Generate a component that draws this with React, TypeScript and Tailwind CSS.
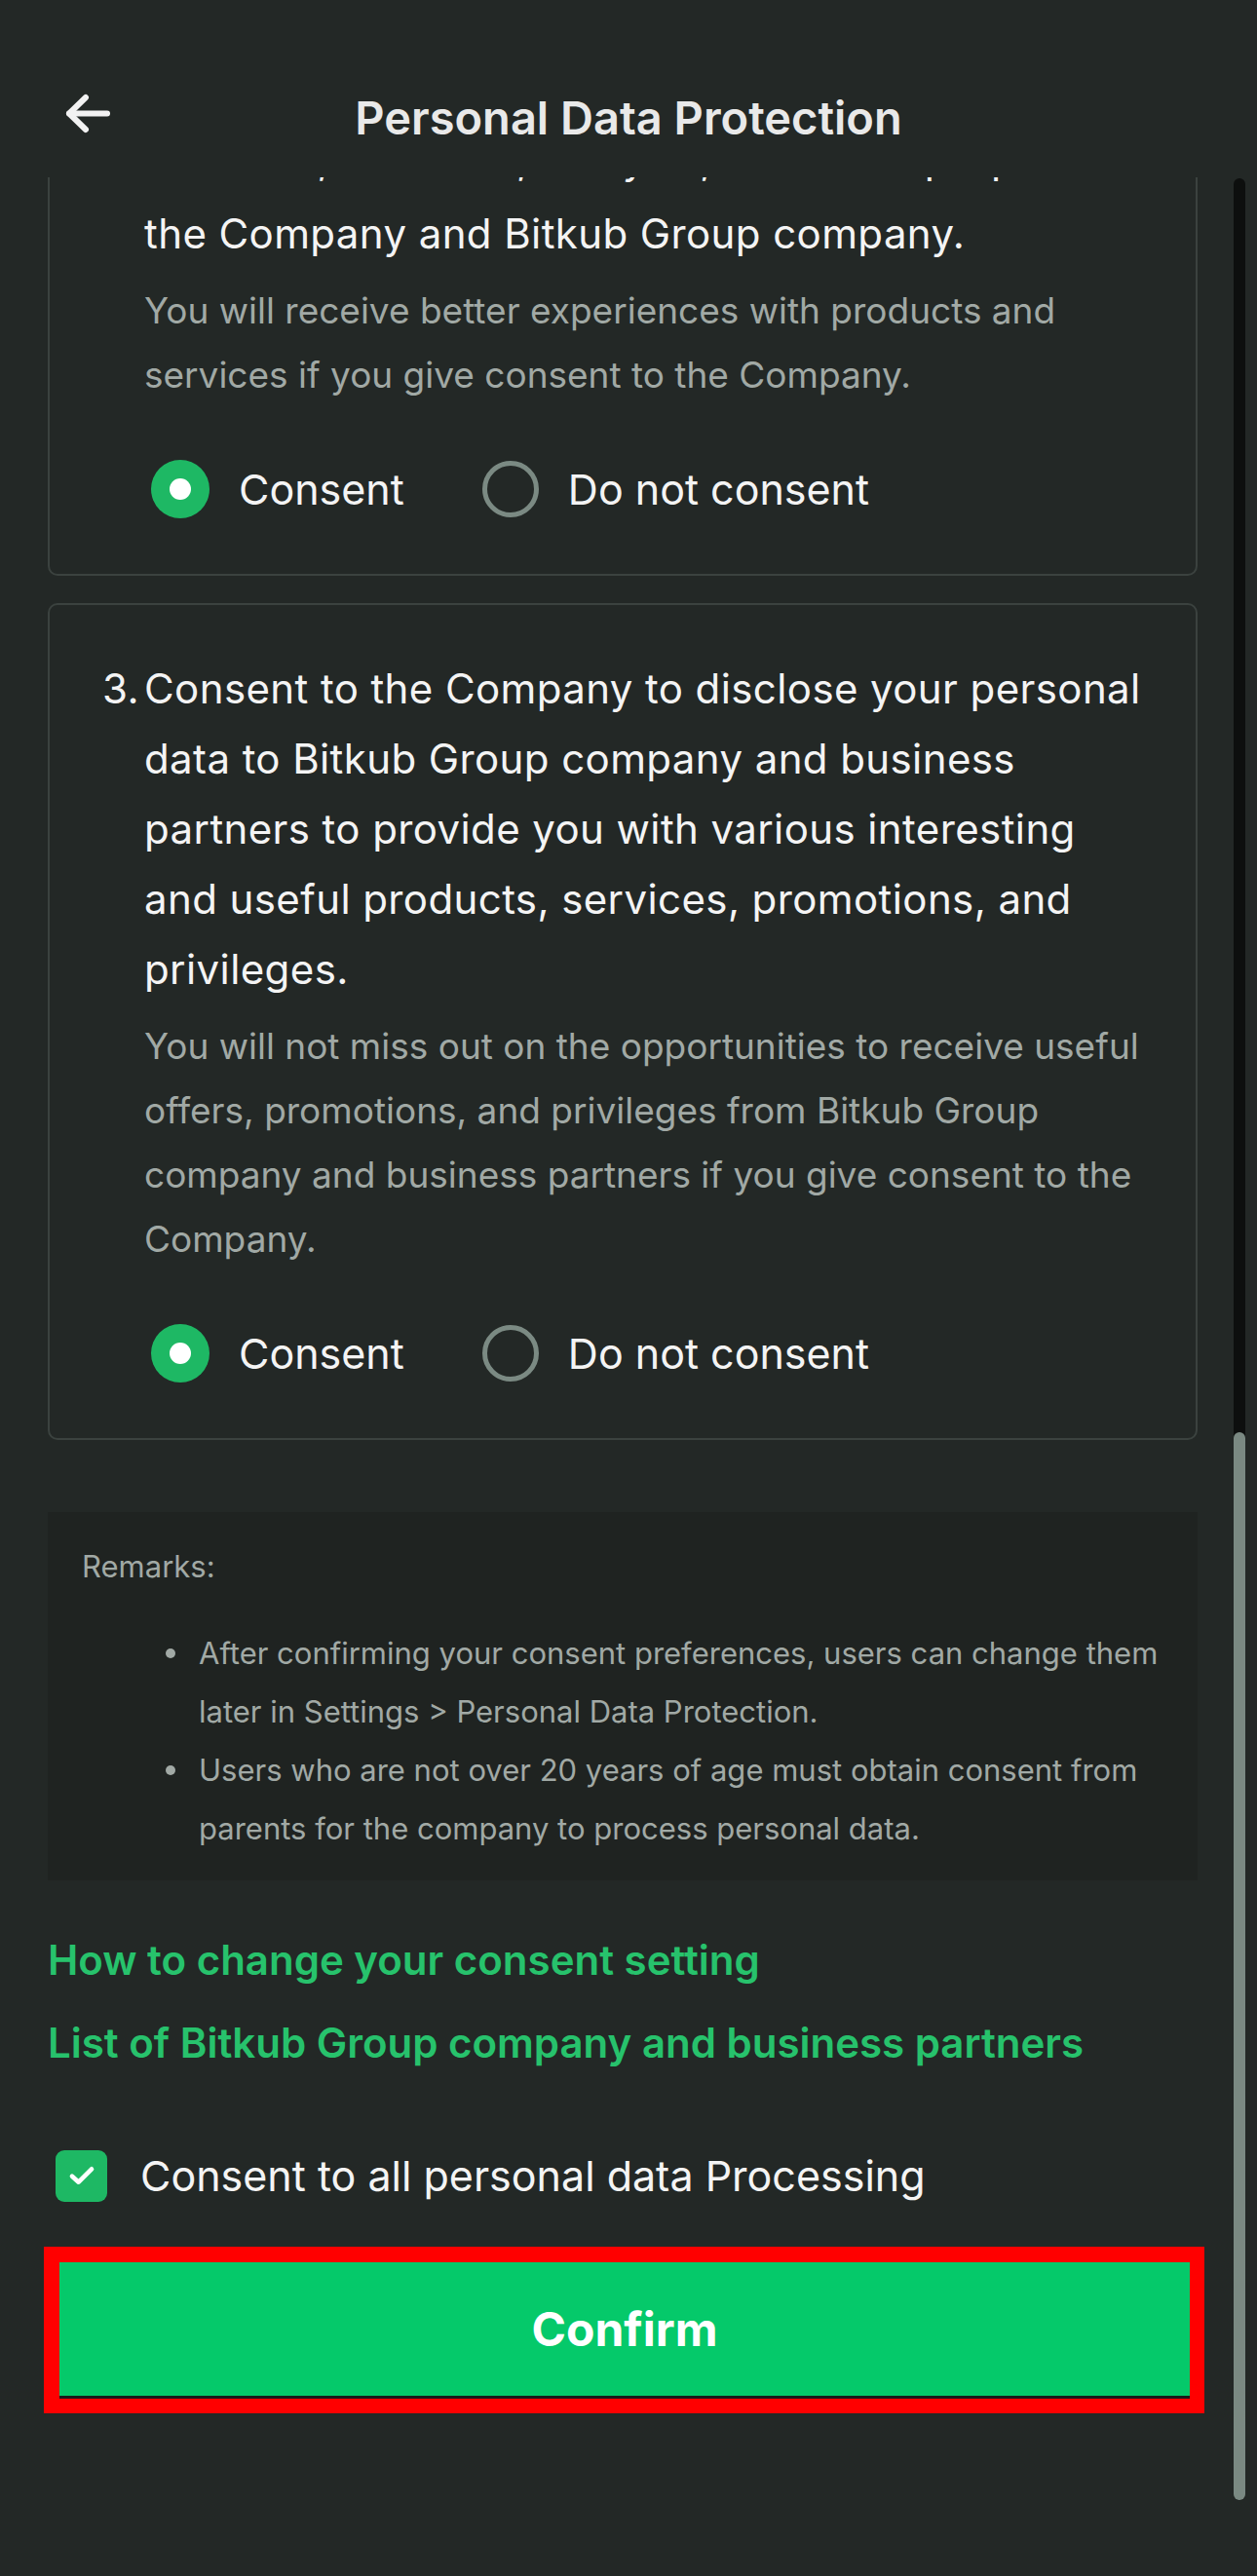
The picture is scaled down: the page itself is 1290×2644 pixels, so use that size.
import React from 'react';

const Radio = ({ checked, label }: { checked: boolean; label: string }) => (
  <div className="flex items-center h-[60px]">
    {checked ? (
      <div className="w-[60px] h-[60px] rounded-full bg-[#1eb864] flex items-center justify-center">
        <div className="w-[22px] h-[22px] rounded-full bg-white" />
      </div>
    ) : (
      <div className="w-[58px] h-[58px] rounded-full border-[5px] border-[#7b8a83]" />
    )}
    <span className="ml-[30px] text-[43px] text-[#f4f4f4]">{label}</span>
  </div>
);

const RadioRow = () => (
  <div className="mt-[54px] ml-[50px] flex items-center gap-[80px]">
    <Radio checked label="Consent" />
    <Radio checked={false} label="Do not consent" />
  </div>
);

const Lines = ({ lines }: { lines: string[] }) => (
  <>
    {lines.map((l, i) => (
      <React.Fragment key={i}>
        {i > 0 && <br />}
        {l}
      </React.Fragment>
    ))}
  </>
);

const ConsentCard = ({
  num,
  title,
  note,
  lifted,
}: {
  num: string;
  title: string[];
  note: string[];
  lifted?: boolean;
}) => {
  const head = title.slice(0, -1);
  const last = title[title.length - 1];
  return (
    <div className="w-[1180px] border-2 border-[#3b423f] rounded-[10px] pt-[50px] pb-[57px] pl-[54px] pr-[20px]">
      <div className="flex">
        <span className="w-[43px] shrink-0 text-[42px] leading-[72px] tracking-[0.4px] text-[#f4f4f4]">{num}</span>
        <div>
          <div className="whitespace-nowrap text-[42px] leading-[72px] tracking-[0.4px] text-[#f4f4f4]">
            <div className={lifted ? 'relative -top-[5px]' : ''}>
              <Lines lines={head} />
            </div>
            <div>{last}</div>
          </div>
          <p className="mt-[10px] whitespace-nowrap text-[37px] leading-[66px] text-[#a1a9a5]">
            <Lines lines={note} />
          </p>
        </div>
      </div>
      <RadioRow />
    </div>
  );
};

const remarks = [
  ['After confirming your consent preferences, users can change them', 'later in Settings > Personal Data Protection.'],
  ['Users who are not over 20 years of age must obtain consent from', 'parents for the company to process personal data.'],
];

export default function App() {
  return (
    <div className="relative w-[1290px] h-[2644px] bg-[#232826] overflow-hidden flex flex-col font-['Inter','Liberation_Sans',sans-serif]">
      {/* header */}
      <div className="relative z-10 h-[182px] shrink-0 bg-[#232826] flex items-center justify-center pt-[60px]">
        <button className="absolute left-[66px] top-[96px] w-[48px] h-[42px]">
          <svg viewBox="0 0 48 42" className="w-[48px] h-[42px]" fill="none" stroke="#f2f2f2" strokeWidth="6" strokeLinecap="round" strokeLinejoin="round">
            <path d="M5 20.5h39" />
            <path d="M22 4L5 20.5L22 37" />
          </svg>
        </button>
        <h1 className="text-[47px] font-semibold text-[#e9e9e9]">Personal Data Protection</h1>
      </div>

      {/* scrolled content */}
      <div className="flex-1 overflow-hidden">
        <div className="-mt-[174px] pl-[49px]">
          <ConsentCard
            num="2."
            lifted
            title={[
              'Consent to the Company to process your personal data for',
              'research, statistics, analysis, and other purposes of',
              'the Company and Bitkub Group company.',
            ]}
            note={[
              'You will receive better experiences with products and',
              'services if you give consent to the Company.',
            ]}
          />
          <div className="mt-[28px]">
            <ConsentCard
              num="3."
              title={[
                'Consent to the Company to disclose your personal',
                'data to Bitkub Group company and business',
                'partners to provide you with various interesting',
                'and useful products, services, promotions, and',
                'privileges.',
              ]}
              note={[
                'You will not miss out on the opportunities to receive useful',
                'offers, promotions, and privileges from Bitkub Group',
                'company and business partners if you give consent to the',
                'Company.',
              ]}
            />
          </div>

          <div className="mt-[74px] w-[1180px] bg-[#1f2321] pt-[26px] pb-[23px] pl-[35px] pr-[20px]">
            <p className="text-[31px] leading-[60px] text-[#a1a9a5]">Remarks:</p>
            <ul className="mt-[29px]">
              {remarks.map((r) => (
                <li key={r[0]} className="flex">
                  <div className="h-[60px] flex items-center ml-[86px] shrink-0">
                    <span className="w-[10px] h-[10px] rounded-full bg-[#a1a9a5]" />
                  </div>
                  <span className="ml-[24px] whitespace-nowrap text-[31px] leading-[60px] text-[#a1a9a5]">
                    <Lines lines={r} />
                  </span>
                </li>
              ))}
            </ul>
          </div>

          <p className="mt-[52px] text-[42px] leading-[60px] font-semibold text-[#27c26c]">How to change your consent setting</p>
          <p className="mt-[25px] text-[42px] leading-[60px] font-semibold text-[#27c26c]">List of Bitkub Group company and business partners</p>

          <div className="mt-[76px] h-[60px] flex items-center">
            <div className="ml-[8px] w-[53px] h-[53px] rounded-[9px] bg-[#1eb864] flex items-center justify-center">
              <svg viewBox="0 0 24 24" className="w-[32px] h-[32px]" fill="none" stroke="#ffffff" strokeWidth="3.5" strokeLinecap="round" strokeLinejoin="round">
                <path d="M4.5 12.5l5 4.5L19.5 7" />
              </svg>
            </div>
            <span className="ml-[34px] text-[43px] text-[#f4f4f4]">Consent to all personal data Processing</span>
          </div>

          <div className="mt-[43px] -ml-[4px] w-[1191px] border-t-[16px] border-l-[16px] border-r-[15px] border-b-[15px] border-[#ff0000]">
            <button className="w-full h-[140px] bg-[#05c96a] border-b-[3px] border-[#1a1a1a] flex items-center justify-center">
              <span className="text-[48px] font-bold text-white">Confirm</span>
            </button>
          </div>
        </div>
      </div>

      {/* scrollbar */}
      <div className="absolute left-[1266px] top-[183px] w-[12px] h-[1300px] rounded-t-full bg-[#0d0f0e]" />
      <div className="absolute left-[1266px] top-[1470px] w-[12px] h-[1096px] rounded-full bg-[#7a8982]" />
    </div>
  );
}
